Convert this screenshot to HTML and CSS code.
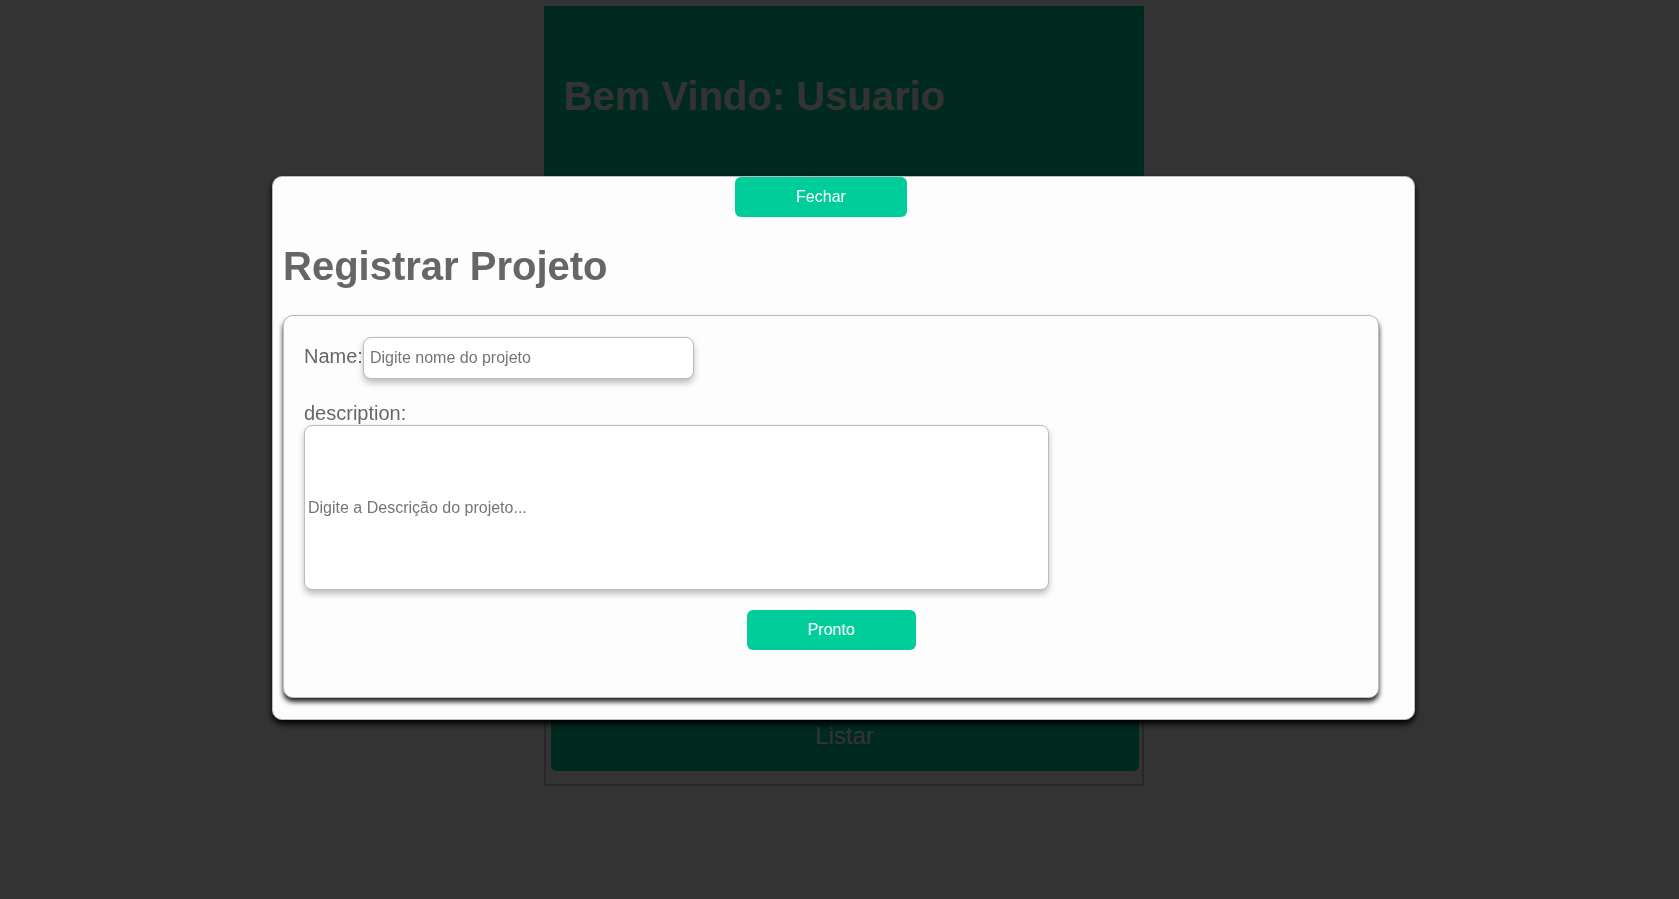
FILE: index.html
```html
<!DOCTYPE html>
<html lang="pt-BR">
<head>
<meta charset="utf-8">
<title>Registrar Projeto</title>
<link rel="stylesheet" href="styles.css">
</head>
<body>
<main class="page">
  <header class="welcome">
    <h1 class="title">Bem Vindo: Usuario</h1>
  </header>
  <section class="actions">
    <button class="list-button" type="button">Listar</button>
  </section>
</main>
<div class="overlay">
  <div class="modal" role="dialog" aria-labelledby="modal-title">
    <button class="button close-button" type="button">Fechar</button>
    <h1 class="title modal-title" id="modal-title">Registrar Projeto</h1>
    <form class="panel">
      <div class="row">
        <label for="name">Name:</label>
        <input class="field name-field" id="name" type="text" placeholder="Digite nome do projeto">
      </div>
      <label for="description">description:</label>
      <input class="field description-field" id="description" type="text" placeholder="Digite a Descrição do projeto...">
      <button class="button submit-button" type="button">Pronto</button>
    </form>
  </div>
</div>
</body>
</html>
```

FILE: styles.css
```css
* {
  box-sizing: border-box;
}

body {
  margin: 0;
  padding: 6px 0 0 8px;
  background: #fff;
  font-family: "Liberation Sans", Arial, sans-serif;
}

button,
input {
  font-family: inherit;
}

.title {
  margin: 0;
  font-size: 40px;
  line-height: 46px;
}

.page {
  max-width: 600px;
  margin: 0 auto;
}

.welcome {
  padding: 67px 20px 69px;
  background: #00cd9a;
  color: #fff;
}

.actions {
  display: flex;
  flex-direction: column;
  justify-content: flex-end;
  min-height: 598px;
  padding: 0 3px 13px 5px;
  border: 2px solid #c0c0c0;
}

.list-button {
  height: 70px;
  border: 0;
  border-radius: 5px;
  background: #00cd9a;
  color: #fff;
  font-size: 24px;
}

.overlay {
  position: fixed;
  inset: 0;
  padding: 176px 264px 0 272px;
  background: rgba(0, 0, 0, 0.8);
}

.modal {
  display: flex;
  flex-direction: column;
  padding: 0 35px 21px 10px;
  border: 1px solid #bbb;
  border-radius: 10px;
  background: #fdfdfd;
  box-shadow: 0 4px 6px #000;
  color: #666;
}

.modal-title {
  margin: 26px 0;
}

.button {
  height: 40px;
  border: 0;
  border-radius: 6px;
  background: #00cd9a;
  color: #fff;
  font-size: 16px;
}

.close-button {
  align-self: center;
  width: 172px;
  margin-right: 20px;
}

.panel {
  display: flex;
  flex-direction: column;
  padding: 21px 20px 47px;
  border: 1px solid #bbb;
  border-radius: 10px;
  background: #fdfdfd;
  box-shadow: 0 4px 5px rgba(0, 0, 0, 0.85);
  font-size: 20px;
  line-height: 23px;
}

.row {
  display: flex;
  align-items: baseline;
  margin-bottom: 23px;
}

.field {
  border: 1px solid #bbb;
  border-radius: 8px;
  background: #fff;
  box-shadow: 0 4px 6px rgba(0, 0, 0, 0.25);
  color: #666;
  font-size: 16px;
}

.name-field {
  width: 331px;
  height: 42px;
  padding: 0 6px;
}

.description-field {
  width: 100%;
  max-width: 745px;
  height: 165px;
  padding: 0 3px;
}

.submit-button {
  align-self: center;
  width: 169px;
  margin-top: 20px;
}
```
